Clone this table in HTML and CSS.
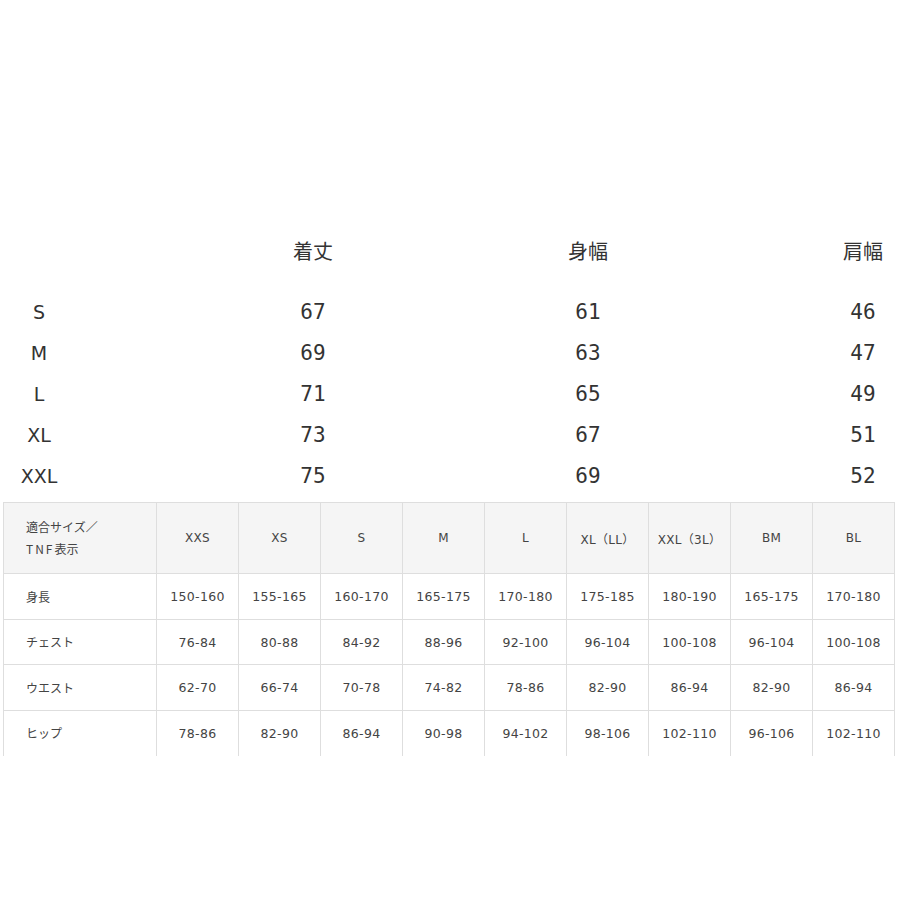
FILE: index.html
```html
<!DOCTYPE html>
<html lang="ja">
<head>
<meta charset="utf-8">
<title>サイズ表</title>
<link rel="stylesheet" href="styles.css">
</head>
<body>
<div class="page">
  <div class="measure">
    <div class="cell label top"></div>
    <div class="cell head top">着丈</div>
    <div class="cell head top">身幅</div>
    <div class="cell head top">肩幅</div>

    <div class="cell label">S</div>
    <div class="cell num">67</div>
    <div class="cell num">61</div>
    <div class="cell num">46</div>

    <div class="cell label">M</div>
    <div class="cell num">69</div>
    <div class="cell num">63</div>
    <div class="cell num">47</div>

    <div class="cell label">L</div>
    <div class="cell num">71</div>
    <div class="cell num">65</div>
    <div class="cell num">49</div>

    <div class="cell label">XL</div>
    <div class="cell num">73</div>
    <div class="cell num">67</div>
    <div class="cell num">51</div>

    <div class="cell label">XXL</div>
    <div class="cell num">75</div>
    <div class="cell num">69</div>
    <div class="cell num">52</div>
  </div>

  <table class="chart">
    <colgroup>
      <col class="c-first">
      <col class="c-size"><col class="c-size"><col class="c-size">
      <col class="c-size"><col class="c-size"><col class="c-size">
      <col class="c-size"><col class="c-size"><col class="c-size">
    </colgroup>
    <thead>
      <tr class="r-head">
        <th class="rowname">適合サイズ／<br><span class="latin">TNF</span>表示</th>
        <th>XXS</th><th>XS</th><th>S</th><th>M</th><th>L</th>
        <th>XL（LL）</th><th>XXL（3L）</th><th>BM</th><th>BL</th>
      </tr>
    </thead>
    <tbody>
      <tr class="r-a">
        <td class="rowname">身長</td>
        <td>150-160</td><td>155-165</td><td>160-170</td><td>165-175</td><td>170-180</td>
        <td>175-185</td><td>180-190</td><td>165-175</td><td>170-180</td>
      </tr>
      <tr class="r-b">
        <td class="rowname">チェスト</td>
        <td>76-84</td><td>80-88</td><td>84-92</td><td>88-96</td><td>92-100</td>
        <td>96-104</td><td>100-108</td><td>96-104</td><td>100-108</td>
      </tr>
      <tr class="r-a">
        <td class="rowname">ウエスト</td>
        <td>62-70</td><td>66-74</td><td>70-78</td><td>74-82</td><td>78-86</td>
        <td>82-90</td><td>86-94</td><td>82-90</td><td>86-94</td>
      </tr>
      <tr class="r-last">
        <td class="rowname">ヒップ</td>
        <td>78-86</td><td>82-90</td><td>86-94</td><td>90-98</td><td>94-102</td>
        <td>98-106</td><td>102-110</td><td>96-106</td><td>102-110</td>
      </tr>
    </tbody>
  </table>
</div>
</body>
</html>
```

FILE: styles.css
```css
html, body {
  margin: 0;
  padding: 0;
  background: #ffffff;
}

.page {
  width: 900px;
  height: 900px;
  padding-top: 230px;
  box-sizing: border-box;
  color: #333333;
  font-family: "DejaVu Sans", "Noto Sans CJK JP", sans-serif;
}

.measure {
  display: grid;
  grid-template-columns: 73px repeat(3, 70px);
  grid-template-rows: 61px;
  grid-auto-rows: 41px;
  column-gap: 205px;
}

.cell {
  display: flex;
  align-items: center;
  justify-content: center;
  white-space: nowrap;
}

.cell.top {
  align-self: start;
  height: 41px;
}

.label {
  padding-left: 5px;
  font-family: "DejaVu Sans", sans-serif;
  font-size: 19px;
  color: #333333;
}

.head {
  font-family: "Noto Sans CJK JP", sans-serif;
  font-size: 20px;
  color: #333333;
}

.num {
  font-family: "DejaVu Sans Mono", monospace;
  font-size: 21px;
  color: #333333;
}

.chart {
  margin-top: 6px;
  margin-left: 3px;
  width: 890px;
  table-layout: fixed;
  border-collapse: collapse;
  font-family: "DejaVu Sans", "Noto Sans CJK JP", sans-serif;
  font-size: 12.5px;
  letter-spacing: 0.3px;
  color: #444444;
}

.c-first { width: 153px; }
.c-size { width: 82px; }

.chart th,
.chart td {
  border: 1px solid #dedede;
  text-align: center;
  font-weight: normal;
  padding: 0;
  white-space: nowrap;
}

.chart thead th {
  background: #f5f5f5;
  font-size: 12px;
}

.chart .rowname {
  text-align: left;
  padding-left: 22px;
  font-family: "Noto Sans CJK JP", sans-serif;
  font-size: 12px;
  letter-spacing: 0;
  line-height: 22px;
}

.chart .latin {
  letter-spacing: 2px;
}

.r-head { height: 71px; }
.r-a { height: 46px; }
.r-b { height: 45px; }
.r-last { height: 45px; }

.r-last td {
  border-bottom: none;
}
```
